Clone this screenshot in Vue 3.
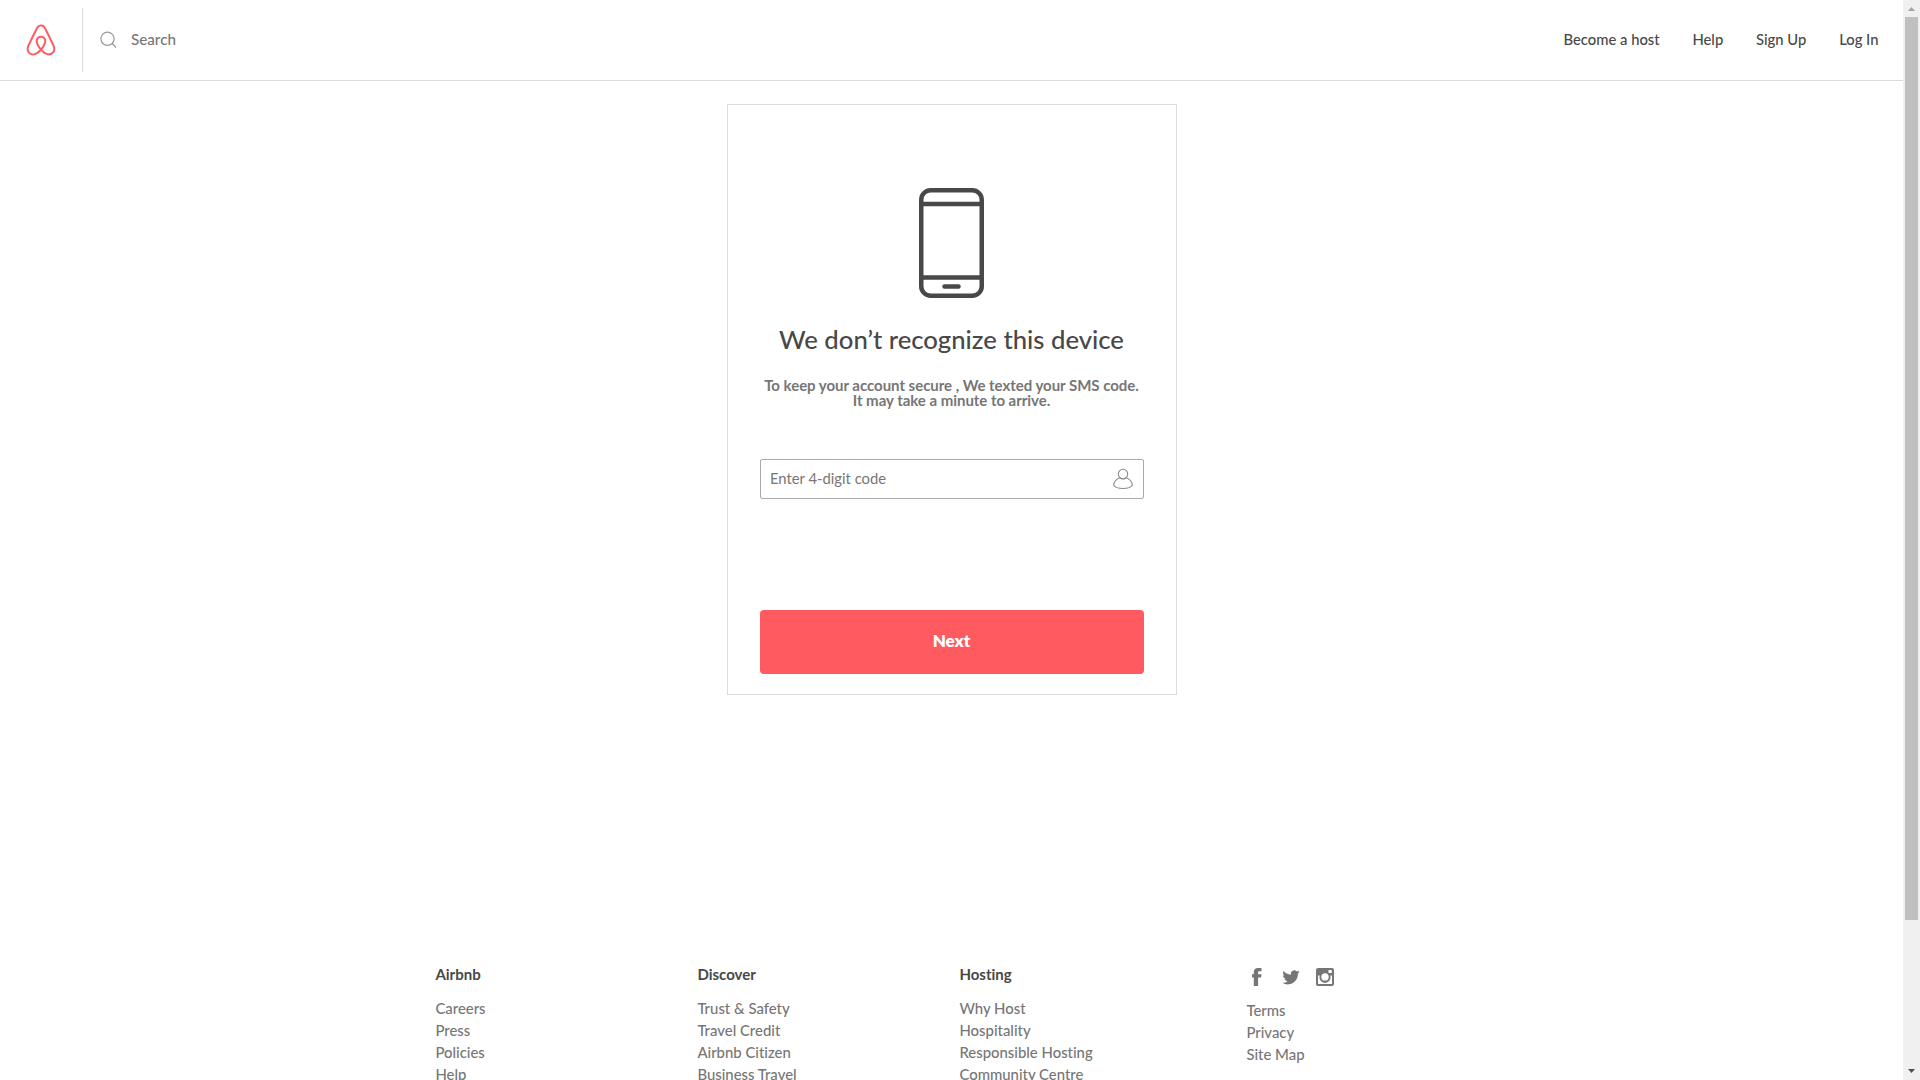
<script setup>
const nav = ['Become a host', 'Help', 'Sign Up', 'Log In']
const columns = [
  { title: 'Airbnb', links: ['Careers', 'Press', 'Policies', 'Help'] },
  { title: 'Discover', links: ['Trust & Safety', 'Travel Credit', 'Airbnb Citizen', 'Business Travel'] },
  { title: 'Hosting', links: ['Why Host', 'Hospitality', 'Responsible Hosting', 'Community Centre'] },
]
const legal = ['Terms', 'Privacy', 'Site Map']
</script>

<template>
  <div class="screen">
    <div class="page">
      <header class="header">
        <a class="brand">
          <svg class="logo" viewBox="0 0 1000 1000"><path d="M499.3 736.7c-51-64-81-120.1-91-168.1-10-39-6-70 11-93 18-27 45-40 80-40s62 13 80 40c17 23 21 54 11 93-11 49-41 105-91 168.1zm362.2 43c-7 47-39 86-83 105-85 37-169.1-22-241.1-102 119.1-149.1 141.1-265.1 90-340.2-30-43-73-64-128.1-64-111 0-172.1 94-148.1 203.1 14 59 51 126.1 110 201.1-37 41-72 70-103 88-24 13-47 21-69 23-101 15-180.1-83-144.1-184.1 5-13 15-37 32-74l1-2c55-120.1 122.1-256.1 199.1-407.2l2-5 22-42c17-31 24-45 51-62 13-8 29-12 47-12 36 0 64 21 76 38 6 9 13 21 22 36l21 41 3 6c77 151.1 144.1 287.1 199.1 407.2l1 1 20 46 12 29c9.2 23.1 11.2 46.1 8.2 70.1zm46-90.1c-7-22-19-48-34-79v-1c-71-151.1-137.1-287.1-200.1-409.2l-4-6c-45-92-77-147.1-170.1-147.1-92 0-131.1 64-171.1 147.1l-3 6c-63 122.1-129.1 258.1-200.1 409.2v2l-21 46c-8 19-12 29-13 32-51 140.1 54 263.1 181.1 263.1 1 0 5 0 10-1h14c66-8 134.1-50 203.1-125.1 69 75 137.1 117.1 203.1 125.1h14c5 1 9 1 10 1 127.1.1 232.1-123 181.1-263.1z" /></svg>
        </a>
        <svg class="search-icon" viewBox="0 0 18 18"><circle cx="7.5" cy="7.8" r="6.6" /><path d="M12.2 12.5l3.8 4" /></svg>
        <span class="search">Search</span>
        <nav class="nav">
          <a v-for="item in nav" :key="item">{{ item }}</a>
        </nav>
      </header>

      <main class="card">
        <svg class="phone" viewBox="0 0 65 110">
          <rect x="2.25" y="2.25" width="60.5" height="105.5" rx="9.5" />
          <path d="M2 16.1h61M2 89.4h61" />
          <path class="home" d="M25.5 98.6h14" />
        </svg>
        <h1 class="title">We don’t recognize this device</h1>
        <p class="subtitle">To keep your account secure , We texted your SMS code.<br>It may take a minute to arrive.</p>
        <div class="field">
          <span>Enter 4-digit code</span>
          <svg class="user" viewBox="0 0 20 22"><ellipse cx="10" cy="6" rx="4.7" ry="4.8" /><path d="M6.7 9.8C3.3 11.2 .9 14.6 .7 17.300c1.200 2 4.800 3.200 9.300 3.200s8.100-1.200 9.300-3.200c-.2-2.700-2.600-6.100-6-7.500-2 1.300-4.600 1.300-6.600 0z" /></svg>
        </div>
        <button class="next">Next</button>
      </main>

      <footer class="footer">
        <section v-for="col in columns" :key="col.title" class="col">
          <h2>{{ col.title }}</h2>
          <a v-for="link in col.links" :key="link">{{ link }}</a>
        </section>
        <section class="col last">
          <div class="social">
            <svg viewBox="0 0 18 18"><path d="M5.800 18V9.500H4V6.200h1.800V4.300C5.800 1.500 7.300 0 10.200 0h3.300v3.200h-2c-1 0-1.400.5-1.400 1.400v1.600h3.400l-.4 3.300h-3V18z" /></svg>
            <svg viewBox="-.5 -1 25 25"><path d="M23.953 4.57a10 10 0 01-2.825.775 4.958 4.958 0 002.163-2.723c-.951.555-2.005.959-3.127 1.184a4.92 4.92 0 00-8.384 4.482C7.69 8.095 4.067 6.13 1.64 3.162a4.822 4.822 0 00-.666 2.475c0 1.71.87 3.213 2.188 4.096a4.904 4.904 0 01-2.228-.616v.06a4.923 4.923 0 003.946 4.827 4.996 4.996 0 01-2.212.085 4.936 4.936 0 004.604 3.417 9.867 9.867 0 01-6.102 2.105c-.39 0-.779-.023-1.17-.067a13.995 13.995 0 007.557 2.209c9.053 0 13.998-7.496 13.998-13.985 0-.21 0-.42-.015-.63A9.935 9.935 0 0024 4.59z" /></svg>
            <svg viewBox="0 0 18 18"><path fill-rule="evenodd" d="M2 0h14a2 2 0 012 2v14a2 2 0 01-2 2H2a2 2 0 01-2-2V2a2 2 0 012-2zM12.5 2v3h3.300V2zM2 7.500V15.500a.6.6 0 00.6.6h12.800a.6.6 0 00.6-.6V7.500h-1.700A5.600 5.600 0 113.700 7.500zM9 5.200a3.700 3.700 0 100 7.400 3.700 3.700 0 000-7.400z" /></svg>
          </div>
          <a v-for="link in legal" :key="link">{{ link }}</a>
        </section>
      </footer>
    </div>

    <div class="scrollbar">
      <span class="arrow up"></span>
      <span class="thumb"></span>
      <span class="arrow down"></span>
    </div>
  </div>
</template>

<style>
body { margin: 0; overflow: hidden; }
</style>

<style scoped>
.screen { display: flex; width: 1920px; height: 1080px; overflow: hidden; background: #fff; color: #484848; font: 500 15px/22px Lato, "Open Sans", sans-serif; font-variant-ligatures: none; }
.page { width: 1903px; height: 1080px; overflow: hidden; }
.header { display: flex; align-items: center; height: 80px; border-bottom: 1px solid #dbdbdb; }
.brand { display: flex; align-items: center; box-sizing: border-box; width: 83px; height: 64px; padding-left: 24px; border-right: 1px solid #dbdbdb; }
.logo { width: 34px; height: 34px; fill: #ff5a5f; }
.search-icon { width: 18px; height: 18px; margin-left: 17px; fill: none; stroke: #9a9a9a; stroke-width: 1.2; }
.search { margin-left: 13px; padding-bottom: 2px; color: #767676; font-size: 15.2px; }
.nav { display: flex; gap: 32.8px; margin-left: auto; padding: 0 24.5px 2px 0; font-size: 14.8px; }
.card { display: flex; flex-direction: column; box-sizing: border-box; width: 450px; height: 591px; margin: 23px 0 0 727px; padding: 83px 32px 20px; border: 1px solid #dbdbdb; }
.phone { align-self: center; width: 65px; height: 110px; margin-right: 1px; fill: none; stroke: #484848; stroke-width: 4.5; }
.home { stroke-linecap: round; }
.title { margin: 25px 1px 0 0; font-size: 25.7px; font-weight: 500; line-height: 32px; text-align: center; white-space: nowrap; }
.subtitle { margin: 23px -9px 0 -10px; color: #767676; font-weight: 700; line-height: 15px; letter-spacing: -0.03px; text-align: center; white-space: nowrap; }
.field { display: flex; align-items: center; justify-content: space-between; box-sizing: border-box; height: 40px; margin-top: 51px; padding: 0 10px 0 9px; border: 1px solid #aaa; border-radius: 2px; color: #767676; font-size: 14.8px; font-weight: 400; }
.field span { padding-bottom: 2px; }
.user { width: 20px; height: 22px; fill: none; stroke: #888f8f; stroke-width: 1.1; }
.next { height: 64px; margin-top: auto; padding: 0 1px 2px 0; border: 0; border-radius: 4px; background: #ff5a5f; color: #fff; font: 800 17px/22px Lato, sans-serif; }
.footer { display: flex; margin: 268px 0 0 435.4px; }
.col { display: flex; flex-direction: column; flex: none; width: 262px; color: #767676; font-size: 14.9px; }
.last { margin-left: 25px; }
.col h2 { margin: 0 0 12px; color: #484848; font-size: 15px; font-weight: 700; line-height: 22px; }
.social { display: flex; gap: 16px; height: 18px; margin: 5px 0 13px 1.6px; }
.social svg { width: 18px; height: 18px; fill: #767676; }
.scrollbar { display: flex; flex-direction: column; align-items: center; width: 17px; height: 1080px; background: #f0f0f0; }
.arrow { width: 7px; height: 4px; }
.up { margin: 7px 0 6px; background: #a3a3a3; clip-path: polygon(50% 0, 100% 100%, 0 100%); }
.thumb { width: 13px; height: 903px; background: #c0c0c0; }
.down { margin: auto 0 7px; background: #505050; clip-path: polygon(0 0, 100% 0, 50% 100%); }
</style>
